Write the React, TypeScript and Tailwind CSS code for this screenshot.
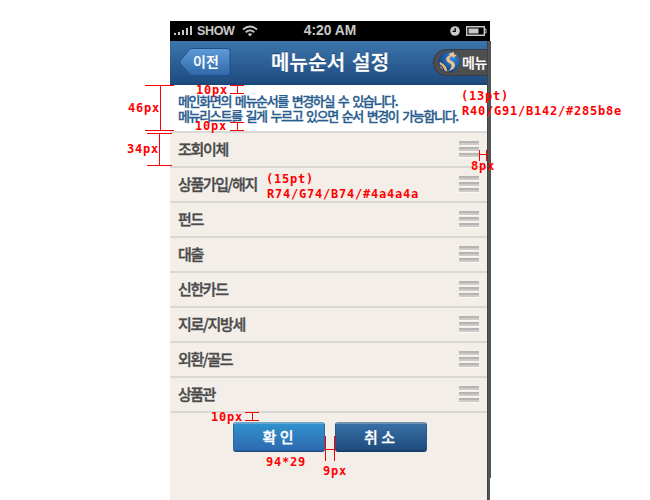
import React from 'react';

const items: [string, string][] = [
  ['조회이체', 'tracking-[-1.3px]'],
  ['상품가입/해지', 'tracking-[-1.4px]'],
  ['펀드', 'tracking-[-1.3px]'],
  ['대출', 'tracking-[-1.3px]'],
  ['신한카드', 'tracking-[-1.4px]'],
  ['지로/지방세', 'tracking-[-1.3px]'],
  ['외환/골드', 'tracking-[-1.4px]'],
  ['상품관', 'tracking-[-1.5px]'],
];

function Grip() {
  return (
    <div className="-mt-px flex flex-col gap-[2px]">
      {[0, 1, 2].map((i) => (
        <div key={i} className="h-[4px] w-5 border-t-2 border-[#b6b5b3] bg-[#cdcbc8] shadow-[0_1px_0_#faf8f5]" />
      ))}
    </div>
  );
}

function StatusBar() {
  return (
    <div className="grid h-5 w-[320px] grid-cols-3 items-center bg-black font-['Liberation_Sans',sans-serif] text-[13px] leading-none text-[#c9c9c9]">
      <div className="flex items-center pl-1">
        <svg width="19" height="10" viewBox="0 0 19 10" fill="#c9c9c9">
          <path d="M0 7h2v2H0zM4 6h2v3H4zM8 4h2v5H8zM12 2h2v7h-2zM16 0h2v9h-2z" />
        </svg>
        <span className="ml-[4px] w-[36px] text-[12.5px] font-bold tracking-[-0.35px]">SHOW</span>
        <svg className="ml-[9px]" width="16" height="12" viewBox="0 0 16 12" fill="none" stroke="#c9c9c9" strokeWidth="1.8">
          <path d="M1 4.5Q8-1.5 15 4.5M3.7 7.2Q8 3.5 12.3 7.2" />
          <path d="M5.8 9Q8 7.3 10.2 9L8 11.5z" fill="#c9c9c9" stroke="none" />
        </svg>
      </div>
      <div className="text-center text-[13.8px] font-bold">4:20 AM</div>
      <div className="flex items-center justify-end gap-[6px] pr-[3px]">
        <svg width="10" height="10" viewBox="0 0 10 10">
          <circle cx="5" cy="5" r="4.8" fill="#c9c9c9" />
          <path d="M5.2 2v3.4H2.6" fill="none" stroke="#000" strokeWidth="1.3" />
        </svg>
        <svg width="21" height="10" viewBox="0 0 21 10">
          <path d="M.7.7h17.6v8.6H.7z" fill="none" stroke="#c9c9c9" strokeWidth="1.4" />
          <path d="M2.5 2.5h10v5h-10z" fill="#c9c9c9" />
          <path d="M18.5 3H20v4h-1.5" fill="none" stroke="#c9c9c9" />
        </svg>
      </div>
    </div>
  );
}

function NavBar() {
  return (
    <div className="flex h-11 w-[317px] items-center border-b-2 border-[#1c4577] bg-gradient-to-b from-[#3c76ac] to-[#1f4b80] text-white">
      <div className="relative ml-[9px] h-7 w-[52px]">
        <svg className="absolute inset-0" width="52" height="29" viewBox="0 0 52 29">
          <defs>
            <linearGradient id="back" x1="0" y1="0" x2="0" y2="1">
              <stop offset="0" stopColor="#5e9bd8" />
              <stop offset="1" stopColor="#2f68aa" />
            </linearGradient>
          </defs>
          <path d="M10.5 1.5Q11.5.5 13 .5H48q3 0 3 3v21q0 3-3 3H13q-1.500 0-2.500-1.200L1.200 15.500Q.300 14 1.200 12.700z" fill="url(#back)" stroke="#214e86" />
        </svg>
        <span className="relative block pl-[14px] text-[14px] leading-[27px] font-medium [-webkit-text-stroke:0.2px_#fff]">이전</span>
      </div>
      <div className="ml-[40px] w-[121px] text-[20px] leading-[42px] font-medium tracking-[0.2px] whitespace-nowrap [-webkit-text-stroke:0.4px_#fff] [text-shadow:0_-1px_0_#183c66] [word-spacing:2px]">메뉴순서 설정</div>
      <div className="ml-[41px] flex h-[27px] w-[54px] items-center rounded-l-full border border-r-0 border-[#333e4c] bg-[#4e4e4e] pl-1">
        <svg className="shrink-0" width="22" height="22" viewBox="0 0 22 22">
          <defs>
            <radialGradient id="globe" cx="0.65" cy="0.35" r="0.75">
              <stop offset="0" stopColor="#3989dd" />
              <stop offset="1" stopColor="#0b3474" />
            </radialGradient>
          </defs>
          <circle cx="11" cy="11" r="10.500" fill="url(#globe)" />
          <path d="M16 1L10.500 2.800L12 4Q7 6.500 8.500 9.500Q9.500 11.300 12 12.500Q14.500 14 13.200 16.500Q12.500 18.500 9.500 20.500Q16.800 18.300 17 14.500Q17 11.500 13.500 10Q10.500 8.500 12 6.500Q12.800 5.500 14.200 5.300L15.500 7L18.800 3.800L16 3.800z" fill="#f2c68b" />
          <path d="M2 11Q8.500 14 9.500 20.500Q8 20.500 6.500 19.500Q5.500 15 1.500 13zM1.500 14.500Q4.500 16 5 19Q2.500 17.500 1.500 14.500z" fill="#eeb76f" />
        </svg>
        <span className="ml-[2px] text-[14px] font-medium tracking-[-0.3px] whitespace-nowrap [-webkit-text-stroke:0.2px_#fff]">메뉴</span>
      </div>
    </div>
  );
}

function Note({ className, children }: { className: string; children: string }) {
  return (
    <span className={`absolute font-['DejaVu_Sans_Mono',monospace] text-[12px] leading-[12px] font-bold tracking-[0.78px] whitespace-pre text-[#ff0000] ${className}`}>
      {children}
    </span>
  );
}

export default function App() {
  return (
    <div className="relative h-[500px] w-[650px] overflow-hidden bg-white pt-[21px] pl-[170px] font-['Noto_Sans_CJK_KR',sans-serif]">
      <StatusBar />
      <div className="flex w-[321px]">
        <main className="h-[459px] w-[317px] shrink-0 bg-[#f3eee8]">
          <NavBar />
          <div className="h-[46px] bg-white pt-[8px] pl-2 text-[13px] leading-[15px] font-medium whitespace-nowrap text-[#285b8e] [-webkit-text-stroke:0.3px_#285b8e]">
            <p className="tracking-[-1.35px] [word-spacing:2.2px]">메인화면의 메뉴순서를 변경하실 수 있습니다.</p>
            <p className="tracking-[-1.35px] [word-spacing:2.2px]">메뉴리스트를 길게 누르고 있으면 순서 변경이 가능합니다.</p>
          </div>
          <ul className="border-t-2 border-[#d9d8d6]">
            {items.map(([label, spacing]) => (
              <li key={label} className="flex h-[35px] items-center justify-between border-b-2 border-[#d9d8d6] pr-2 pl-2">
                <span className={`-mt-px text-[15px] leading-[32px] font-medium text-[#4a4a4a] [-webkit-text-stroke:0.35px_#4a4a4a] ${spacing}`}>{label}</span>
                <Grip />
              </li>
            ))}
          </ul>
          <div className="mt-[9px] flex gap-[10px] pl-[63px] text-[15px] font-medium text-white [-webkit-text-stroke:0.3px_#fff] [word-spacing:1px]">
            <button className="h-[30px] w-[92px] rounded-[3px] border border-t-2 border-[#286aa2] border-t-[#68a6ce] border-b-[#1d4c81] bg-gradient-to-b from-[#3092cd] to-[#2e69af] pr-[2px] pb-[2px] leading-[24px] shadow-[inset_0_-1px_0_#245a96]">확 인</button>
            <button className="h-[30px] w-[92px] rounded-[3px] border border-t-2 border-[#285787] border-t-[#6e91b4] border-b-[#173d6c] bg-gradient-to-b from-[#3870a6] to-[#1e4a7c] pr-[3px] pb-[2px] leading-[24px] shadow-[inset_0_-1px_0_#1b416f]">취 소</button>
          </div>
        </main>
        <div className="flex h-[459px] items-start">
          <div className="h-full w-[3px] border-l border-[#3d4347] bg-[#525555]" />
          <div className="h-[437px] w-px bg-[#525555]" />
        </div>
      </div>

      <svg className="absolute inset-0" width="650" height="500" viewBox="0 0 650 500" fill="none" stroke="#ff0000" shapeRendering="crispEdges">
        <path d="M145 85.500H174M145 130.500H174M160.500 85V131" />
        <path d="M147 133.500H172M147 165.500H172M159.500 133V166" />
        <path d="M230 85.500H244M230 93.500H244M237.500 85V94" />
        <path d="M230 122.500H244M230 130.500H244M237.500 122V131" />
        <path d="M479.500 150V161M486.500 150V161M479 154.500H487" />
        <path d="M245 412.500H259M245 420.500H259M252.500 412V421" />
        <path d="M325.500 436V461M334.500 436V461M325 449.500H335" />
      </svg>
      <Note className="top-[84px] left-[196px]">10px</Note>
      <Note className="top-[102px] left-[128px]">46px</Note>
      <Note className="top-[120px] left-[195px]">10px</Note>
      <Note className="top-[143px] left-[127px]">34px</Note>
      <Note className="top-[90px] left-[461px]">(13pt)</Note>
      <Note className="top-[105px] left-[462px]">R40/G91/B142/#285b8e</Note>
      <Note className="top-[160px] left-[471px]">8px</Note>
      <Note className="top-[173px] left-[266px]">(15pt)</Note>
      <Note className="top-[188px] left-[267px]">R74/G74/B74/#4a4a4a</Note>
      <Note className="top-[411px] left-[211px]">10px</Note>
      <Note className="top-[456px] left-[266px]">94*29</Note>
      <Note className="top-[465px] left-[323px]">9px</Note>
    </div>
  );
}
